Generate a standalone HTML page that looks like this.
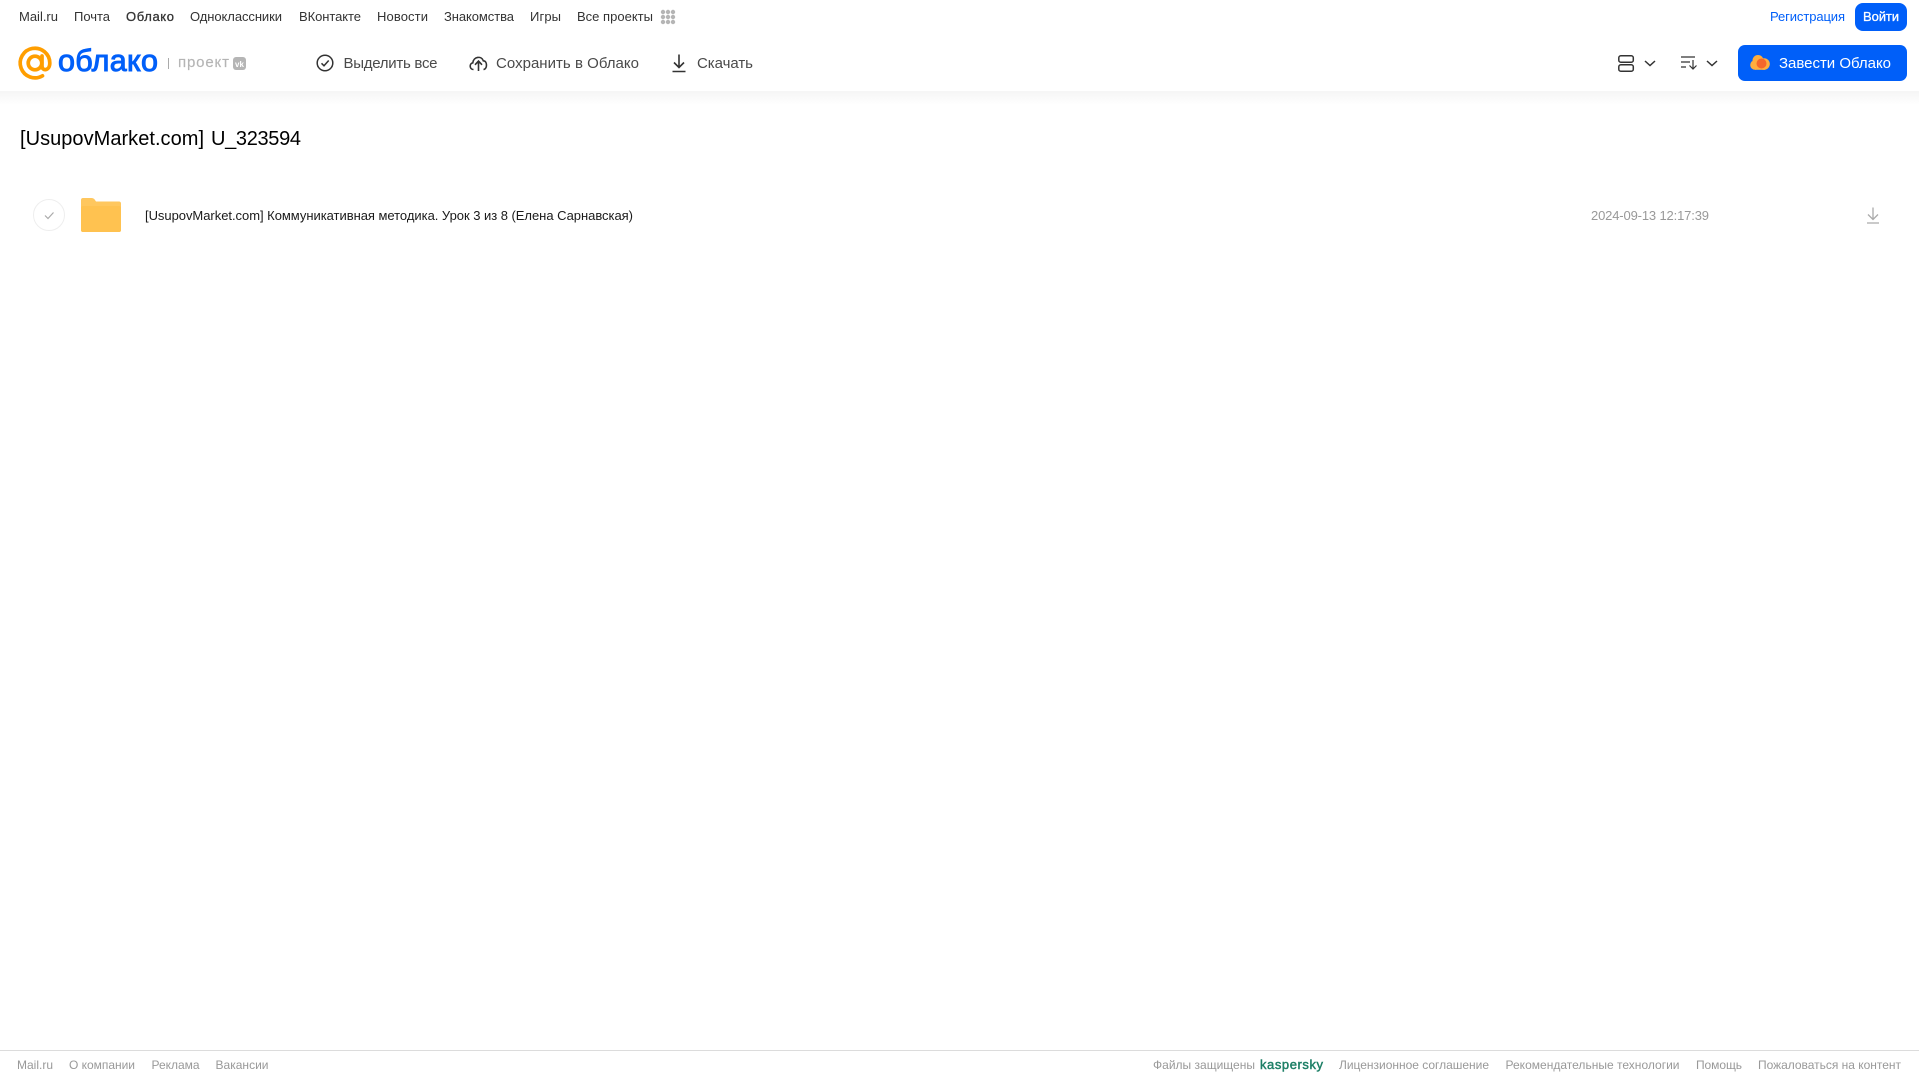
<!DOCTYPE html>
<html lang="ru"><head><meta charset="utf-8"><title>Облако</title>
<style>
html,body{margin:0;padding:0;background:#fff;width:1919px;height:1079px;overflow:hidden}
svg{display:block;position:absolute;left:0;top:0}
text{font-family:"Liberation Sans","Noto Sans CJK SC",sans-serif;white-space:pre}
.n{font-size:13px;fill:#333}
.t{font-size:15px;fill:#4a4a4a}
.f{font-size:12px;fill:#999}
</style></head><body>
<svg width="1919" height="1079" viewBox="0 0 1919 1079" xmlns="http://www.w3.org/2000/svg">
<defs><linearGradient id="sh" x1="0" y1="0" x2="0" y2="1"><stop offset="0" stop-color="#f5f5f5"/><stop offset="1" stop-color="#fff"/></linearGradient></defs>
<rect x="0" y="91" width="1919" height="14" fill="url(#sh)"/>

<!-- top nav -->
<text class="n" x="19" y="21" textLength="39">Mail.ru</text>
<text class="n" x="74" y="21" textLength="36">Почта</text>
<text class="n" x="126" y="21" textLength="48" style="stroke:#333;stroke-width:.3">Облако</text>
<text class="n" x="190" y="21" textLength="92">Одноклассники</text>
<text class="n" x="299" y="21" textLength="62">ВКонтакте</text>
<text class="n" x="377" y="21" textLength="51">Новости</text>
<text class="n" x="444" y="21" textLength="70">Знакомства</text>
<text class="n" x="530" y="21" textLength="31">Игры</text>
<text class="n" x="577" y="21" textLength="76">Все проекты</text>
<g fill="#b5b5b5">
<circle cx="663" cy="12" r="2.200"/><circle cx="668" cy="12" r="2.200"/><circle cx="673" cy="12" r="2.200"/>
<circle cx="663" cy="17" r="2.200"/><circle cx="668" cy="17" r="2.200"/><circle cx="673" cy="17" r="2.200"/>
<circle cx="663" cy="22" r="2.200"/><circle cx="668" cy="22" r="2.200"/><circle cx="673" cy="22" r="2.200"/>
</g>
<text class="n" x="1770" y="21" textLength="75" style="fill:#005ff9">Регистрация</text>
<rect x="1855" y="3" width="52" height="28" rx="8" fill="#005ff9"/>
<text class="n" x="1863" y="21" textLength="36" style="fill:#fff;stroke:#fff;stroke-width:.3">Войти</text>

<!-- logo -->
<g fill="none" stroke="#ff9e00" stroke-width="3.700">
<circle cx="35" cy="63" r="6.800"/>
<path d="M42 56V66C42 71.500 49.800 71 49.800 63A14.800 14.800 0 1 0 42.500 75.800" stroke-linecap="round"/>
</g>
<text x="58" y="71" textLength="100" style="font-size:30.5px;fill:#005ff9;stroke:#005ff9;stroke-width:1">облако</text>
<rect x="168" y="58" width="1" height="11" fill="#aaa"/>
<text x="178" y="67" textLength="51" style="font-size:15px;fill:#b5b5b5;stroke:#b5b5b5;stroke-width:.15">проект</text>
<rect x="233" y="57" width="13" height="13" rx="3" fill="#b5b5b5"/>
<text x="235" y="67" style="font-size:8px;font-weight:bold;fill:#fff">vk</text>

<!-- toolbar -->
<circle cx="325" cy="63" r="7.800" fill="none" stroke="#333" stroke-width="1.500"/>
<path d="M321.500 63.300L324 65.800L328.700 60.500" fill="none" stroke="#333" stroke-width="1.500"/>
<text class="t" x="343.500" y="68" textLength="94">Выделить все</text>
<path d="M473.500 69.500C469.500 69.500 469 63.500 472.800 62.800C473.500 56.500 481.500 55.500 483.300 60.800C487.500 60.800 487.500 69 483.500 69.500M475 64.800L478.500 61L482 64.800M478.500 61.500V71" fill="none" stroke="#333" stroke-width="1.600"/>
<text class="t" x="496" y="68" textLength="143">Сохранить в Облако</text>
<path d="M679 54.500V67.500M674 62.500L679 67.500L684 62.500M672.500 71.500H685.500" fill="none" stroke="#333" stroke-width="1.600"/>
<text class="t" x="697" y="68" textLength="56">Скачать</text>

<!-- right controls -->
<g fill="none" stroke="#333" stroke-width="1.500">
<rect x="1618.800" y="55.800" width="14.500" height="6.400" rx="2"/>
<rect x="1618.800" y="64.800" width="14.500" height="6.400" rx="2"/>
<path d="M1645 61L1650 65.500L1655 61"/>
<path d="M1707 61L1712 65.500L1717 61"/>
</g>
<g fill="none" stroke="#333" stroke-width="1.200">
<path d="M1681 57H1695M1681 62H1690M1681 67H1686"/>
<path d="M1693 60V69M1689.500 65.500L1693 69L1696.500 65.500"/>
</g>
<rect x="1738" y="45" width="169" height="36" rx="7" fill="#005ff9"/>
<g fill="#ffae3d">
<circle cx="1755" cy="65" r="4.800"/><circle cx="1758" cy="60.500" r="5.500"/><circle cx="1764" cy="64" r="5.800"/>
<rect x="1755" y="64" width="10" height="5.800"/>
</g>
<circle cx="1761.500" cy="63.500" r="5" fill="#f4672b"/>
<text x="1779" y="68" textLength="112" style="font-size:15px;fill:#fff">Завести Облако</text>

<!-- title -->
<text x="20" y="145" textLength="184" style="font-size:20px;fill:#000">[UsupovMarket.com]</text>
<text x="211" y="145" textLength="90" style="font-size:20px;fill:#000">U_323594</text>

<!-- row -->
<circle cx="49" cy="215" r="15.500" fill="#fff" stroke="#eeeeee" stroke-width="1"/>
<path d="M45 215.500L48 218.500L53.500 212.500" fill="none" stroke="#aaa" stroke-width="1.200"/>
<path d="M83 198H91.500C93 198 94 198.500 95 200L96 201.500H119C120.200 201.500 121 202.300 121 203.500V230C121 231.200 120.200 232 119 232H83C81.800 232 81 231.200 81 230V200C81 198.800 81.800 198 83 198Z" fill="#ffc75e"/>
<rect x="81" y="206" width="40" height="26" rx="2" fill="#ffc250"/>
<text x="145" y="220" textLength="488" style="font-size:13px;fill:#1a1a1a">[UsupovMarket.com] Коммуникативная методика. Урок 3 из 8 (Елена Сарнавская)</text>
<text x="1591" y="220" textLength="118" style="font-size:13px;fill:#999">2024-09-13 12:17:39</text>
<path d="M1873 207.500V219.500M1868 214.500L1873 219.500L1878 214.500M1867 223H1879" fill="none" stroke="#aaa" stroke-width="1.300"/>

<!-- footer -->
<rect x="0" y="1050" width="1919" height="1" fill="#dcdcdc"/>
<text class="f" x="17" y="1069" textLength="36">Mail.ru</text>
<text class="f" x="69" y="1069" textLength="66">О компании</text>
<text class="f" x="151.500" y="1069" textLength="48">Реклама</text>
<text class="f" x="215.500" y="1069" textLength="53">Вакансии</text>
<text class="f" x="1153" y="1069" textLength="102">Файлы защищены</text>
<text x="1260" y="1069" textLength="63" style="font-size:13px;fill:#1d7f66;stroke:#1d7f66;stroke-width:.45">kaspersky</text>
<text class="f" x="1339" y="1069" textLength="150">Лицензионное соглашение</text>
<text class="f" x="1505.500" y="1069" textLength="174">Рекомендательные технологии</text>
<text class="f" x="1696" y="1069" textLength="46">Помощь</text>
<text class="f" x="1758" y="1069" textLength="143">Пожаловаться на контент</text>
</svg>
</body></html>
